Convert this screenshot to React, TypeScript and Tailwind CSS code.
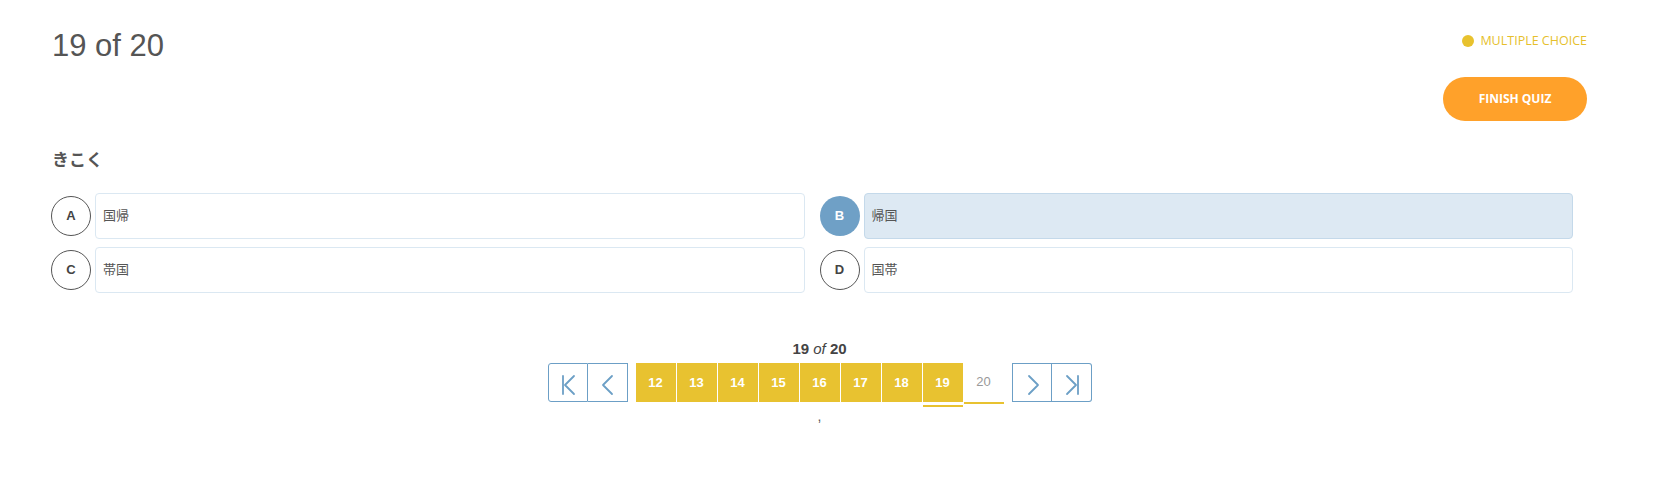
import React from "react";

type Option = {
  letter: string;
  text: string;
  selected?: boolean;
};

const options: Option[] = [
  { letter: "A", text: "国帰" },
  { letter: "B", text: "帰国", selected: true },
  { letter: "C", text: "帯国" },
  { letter: "D", text: "国帯" },
];

const pages = [12, 13, 14, 15, 16, 17, 18, 19];
const current = 19;

const sans = "font-['Liberation_Sans','Noto_Sans_CJK_JP',sans-serif]";

const NavIcon: React.FC<{ kind: "first" | "prev" | "next" | "last" }> = ({ kind }) => (
  <svg width="40" height="39" viewBox="0 0 40 39" fill="none" stroke="#6c9fc6" strokeWidth="1.8" strokeLinecap="round" strokeLinejoin="round">
    {kind === "first" && (
      <>
        <line x1="14" y1="12" x2="14" y2="30" />
        <polyline points="25,12 16,21 25,30" />
      </>
    )}
    {kind === "prev" && <polyline points="24,12 15,21 24,30" />}
    {kind === "next" && <polyline points="16,12 25,21 16,30" />}
    {kind === "last" && (
      <>
        <polyline points="15,12 24,21 15,30" />
        <line x1="26" y1="12" x2="26" y2="30" />
      </>
    )}
  </svg>
);

const OptionRow: React.FC<{ option: Option }> = ({ option }) => (
  <div className="flex h-[46px] items-center gap-[4px]">
    <div
      className={
        option.selected
          ? "flex h-[40px] w-[40px] shrink-0 items-center justify-center rounded-full bg-[#6fa0c6] text-[13px] font-bold text-white"
          : "flex h-[40px] w-[40px] shrink-0 items-center justify-center rounded-full border border-[#555] text-[13px] font-bold text-[#444]"
      }
    >
      {option.letter}
    </div>
    <div
      className={
        option.selected
          ? "flex h-full flex-1 items-center rounded-[4px] border border-[#c4d9ea] bg-[#dde9f3] pl-[7px] text-[13px] text-[#555]"
          : "flex h-full flex-1 items-center rounded-[4px] border border-[#dbe8f2] bg-white pl-[7px] text-[13px] text-[#555]"
      }
    >
      {option.text}
    </div>
  </div>
);

export default function App() {
  return (
    <div className={`min-h-[504px] w-full bg-white pl-[52px] pr-[80px] pt-[28px] ${sans}`}>
      <div className="flex items-start justify-between">
        <h1 className="text-[31px] leading-[36px] font-normal text-[#555]">19 of 20</h1>
        <div className="flex flex-col items-end pt-[4px]">
          <div className="flex h-[18px] items-center gap-[6px] font-['Open_Sans',sans-serif] text-[12.5px] text-[#e6bf2c]">
            <span className="h-[12px] w-[12px] rounded-full bg-[#e8c22e]" />
            <span>MULTIPLE CHOICE</span>
          </div>
          <button className="mt-[27px] h-[44px] w-[144px] rounded-full bg-[#ffa12a] font-['Open_Sans',sans-serif] text-[12px] font-bold text-white">
            FINISH QUIZ
          </button>
        </div>
      </div>

      <h2 className="mt-[28px] text-[17px] leading-[24px] font-bold text-[#555]">きこく</h2>

      <div className="mt-[20px] grid w-[1522px] -ml-px grid-cols-2 gap-x-[15px] gap-y-[8px]">
        {options.map((o) => (
          <OptionRow key={o.letter} option={o} />
        ))}
      </div>

      <div className="mt-[47px] flex flex-col items-center">
        <div className="text-[15px] leading-[18px] font-bold text-[#444]">
          19 <i className="font-normal">of</i> 20
        </div>
        <div className="mt-[5px] flex items-start">
          <div className="flex">
            <button className="h-[39px] w-[40px] rounded-l-[3px] border border-[#6c9fc6]">
              <NavIcon kind="first" />
            </button>
            <button className="h-[39px] w-[40px] border border-l-0 border-[#6c9fc6]">
              <NavIcon kind="prev" />
            </button>
          </div>
          <div className="ml-[8px] flex gap-px">
            {pages.map((p) => (
              <div key={p} className="relative">
                <div className="flex h-[39px] w-[40px] items-center justify-center bg-[#e8c230] text-[13px] font-bold text-white">
                  {p}
                </div>
                {p === current && (
                  <div className="absolute left-0 right-0 top-[42px] h-[2px] bg-[#e8c230]" />
                )}
              </div>
            ))}
            <div className="flex h-[41px] w-[40px] items-center justify-center border-b-2 border-[#e8c230] pb-[2px] text-[13px] text-[#999]">
              20
            </div>
          </div>
          <div className="ml-[8px] flex">
            <button className="h-[39px] w-[40px] border border-[#6c9fc6]">
              <NavIcon kind="next" />
            </button>
            <button className="h-[39px] w-[40px] rounded-r-[3px] border border-l-0 border-[#6c9fc6]">
              <NavIcon kind="last" />
            </button>
          </div>
        </div>
        <div className="mt-[4px] text-[14px] leading-[16px] text-[#555]">,</div>
      </div>
    </div>
  );
}
